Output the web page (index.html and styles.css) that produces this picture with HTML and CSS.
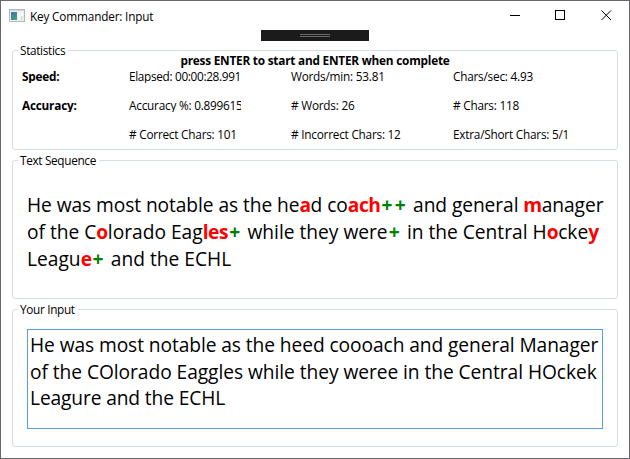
FILE: index.html
```html
<!DOCTYPE html>
<html lang="en">
<head>
<meta charset="utf-8">
<title>Key Commander: Input</title>
<link rel="stylesheet" href="styles.css">
</head>
<body>
<div class="window">
  <header class="titlebar">
    <svg class="app-icon" width="16" height="14" viewBox="0 0 16 14">
      <defs><linearGradient id="g" x1="0" y1="0" x2="1" y2="1"><stop offset="0" stop-color="#3f73a8"/><stop offset="1" stop-color="#46a878"/></linearGradient></defs>
      <rect x=".5" y=".5" width="15" height="12" fill="#eceef0" stroke="#b4b7bd"/>
      <path d="M1 1.5h14" stroke="#d3d7dc"/>
      <rect x="2" y="3" width="6" height="8" fill="url(#g)"/>
      <rect x="9" y="3" width="2" height="8" fill="#f8f8f8"/>
      <rect x="12" y="3" width="2" height="4" fill="#fff"/>
      <rect x="12" y="7" width="2" height="4" fill="#d9e4dc"/>
    </svg>
    <h1 class="title">Key Commander: Input</h1>
    <div class="controls">
      <svg width="46" height="29" viewBox="0 0 46 29"><path d="M18 14.5h10" stroke="#000"/></svg>
      <svg width="46" height="29" viewBox="0 0 46 29"><rect x="17.5" y="9.5" width="9" height="9" fill="none" stroke="#000"/></svg>
      <svg width="46" height="29" viewBox="0 0 46 29"><path d="M17.5 9.5l9.5 9.5M27 9.5l-9.5 9.5" stroke="#000" fill="none"/></svg>
    </div>
  </header>
  <div class="debug-bar"><span class="grip"></span></div>
  <main class="content">
    <fieldset class="group stats">
      <legend>Statistics</legend>
      <p class="hint">press ENTER to start and ENTER when complete</p>
      <div class="grid">
        <b class="speed">Speed:</b><span class="elapsed">Elapsed: 00:00:28.991</span><span>Words/min: 53.81</span><span>Chars/sec: 4.93</span>
        <b class="accuracy">Accuracy:</b><span class="percent">Accuracy %: 0.8996154</span><span># Words: 26</span><span># Chars: 118</span>
        <b></b><span># Correct Chars: 101</span><span># Incorrect Chars: 12</span><span>Extra/Short Chars: 5/1</span>
      </div>
    </fieldset>
    <fieldset class="group sequence">
      <legend>Text Sequence</legend>
      <div class="prose">
        <div class="s1">He was most notable as the he<b>a</b>d co<b>ach</b><i>++</i> and general <b>m</b>anager</div>
        <div class="s2">of the C<b>o</b>lorado Eag<b>les</b><i>+</i> while they were<i>+</i> in the Central H<b>o</b>cke<b>y</b></div>
        <div class="s3">Leagu<b>e</b><i>+</i> and the ECHL</div>
      </div>
    </fieldset>
    <fieldset class="group input">
      <legend>Your Input</legend>
      <div class="prose textbox" contenteditable="true" spellcheck="false">
        <div class="t1">He was most notable as the heed coooach and general Manager</div>
        <div class="t2">of the COlorado Eaggles while they weree in the Central HOckek</div>
        <div class="t3">Leagure and the ECHL</div>
      </div>
    </fieldset>
  </main>
</div>
</body>
</html>
```
FILE: styles.css
```css
* { box-sizing: border-box; }
body { margin: 0; background: #fff; color: #000; font: 11.8px/16px "Open Sans", "Noto Sans", sans-serif; }
.window { width: 630px; height: 459px; border: 1px solid #68686c; overflow: hidden; display: flex; flex-direction: column; background: #fff; }
.titlebar { height: 29px; flex: none; display: flex; align-items: center; padding-left: 8px; }
.app-icon { flex: none; }
.title { margin: 0 0 0 5px; font-size: 11.8px; font-weight: 400; letter-spacing: -.18px; flex: 1; }
.controls { display: flex; margin-right: -1px; }
.debug-bar { width: 108px; height: 11px; flex: none; margin: 0 0 0 260px; background: #1b1b1c; display: flex; justify-content: center; align-items: center; }
.grip { width: 30px; height: 3px; border: solid #6a6a6a; border-width: 1px 0; }
.content { padding: 1px 11px 0; display: flex; flex-direction: column; }
.group { margin: 0; min-width: 0; width: 606px; border: 1px solid #d5dfe5; border-radius: 3px; padding: 0; }
legend { margin-left: 5px; padding: 0 3px 0 2px; height: 16px; line-height: 16px; letter-spacing: -.33px; }
.stats { height: 108px; }
.hint { margin: -6px 0 0; text-align: center; font-weight: 700; line-height: 16px; letter-spacing: -.22px; }
.grid { margin-left: 9px; display: grid; grid-template-columns: 107px 162px 162px 1fr; row-gap: 14px; letter-spacing: -.23px; }
.grid > * { height: 15px; line-height: 16px; overflow: hidden; white-space: nowrap; }
.elapsed, .percent { width: 112px; }
.elapsed { letter-spacing: -.33px; }
.sequence { height: 147px; margin-top: 2px; }
.prose { font-size: 19.2px; line-height: 27px; white-space: nowrap; }
.sequence .prose { padding: 23px 0 0 14px; }
.prose b { color: #f00; letter-spacing: -.4px; }
.prose i { color: #008000; font-style: normal; font-weight: 700; letter-spacing: 2.3px; padding-left: 1px; }
.s1 { letter-spacing: -.08px; }
.s2 { letter-spacing: -.01px; }
.input { height: 146px; margin-top: 2px; }
.textbox { margin: 12px 0 0 14px; width: 576px; height: 100px; border: 1px solid #569de5; padding: 2px; line-height: 26.6px; outline: none; }
.t1 { letter-spacing: -.085px; }
.t2 { letter-spacing: -.06px; }
.t3 { letter-spacing: -.13px; }
```
